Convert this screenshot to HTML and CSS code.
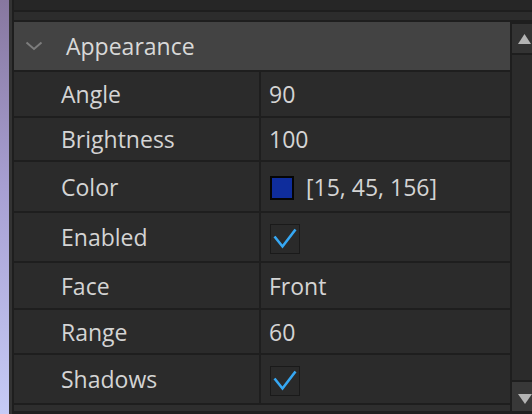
FILE: index.html
```html
<!DOCTYPE html>
<html>
<head>
<meta charset="utf-8">
<link rel="stylesheet" href="styles.css">
</head>
<body>
<div class="desktop"></div>
<div class="panel-edge"></div>
<div class="panel">
  <div class="filter"><span class="filter-text">Filter Properties (Ctrl+Shift+P)</span></div>
  <div class="toolbar"></div>
  <div class="main">
    <div class="list">
      <div class="header">
        <svg class="chevron" width="18" height="10" viewBox="0 0 18 10"><path d="M1.5 1.5 L9 8 L16.5 1.5" fill="none" stroke="#7d7d7d" stroke-width="2"/></svg>
        <span class="header-title">Appearance</span>
      </div>
      <div class="name">Angle</div><div class="value">90</div>
      <div class="name">Brightness</div><div class="value">100</div>
      <div class="name">Color</div><div class="value"><span class="swatch"></span><span class="swatch-text">[15, 45, 156]</span></div>
      <div class="name">Enabled</div><div class="value"><span class="checkbox"><svg width="28" height="28" viewBox="0 0 28 28"><path d="M3.5 11.5 L11.5 21.5 L24.5 4.5" fill="none" stroke="#36a8f4" stroke-width="2.6"/></svg></span></div>
      <div class="name">Face</div><div class="value">Front</div>
      <div class="name">Range</div><div class="value">60</div>
      <div class="name">Shadows</div><div class="value"><span class="checkbox"><svg width="28" height="28" viewBox="0 0 28 28"><path d="M3.5 11.5 L11.5 21.5 L24.5 4.5" fill="none" stroke="#36a8f4" stroke-width="2.6"/></svg></span></div>
      <div class="footer"></div>
    </div>
    <div class="scrollbar">
      <div class="scroll-btn"><svg width="20" height="29" viewBox="0 0 20 29"><path d="M6 20 L12.5 10 L19 20 Z" fill="#b4b4b4"/></svg></div>
      <div class="track"></div>
      <div class="scroll-btn down"><svg width="20" height="29" viewBox="0 0 20 29"><path d="M6 12 L20 12 L13 22 Z" fill="#b4b4b4"/></svg></div>
    </div>
  </div>
</div>
</body>
</html>
```

FILE: styles.css
```css
html, body {
  margin: 0;
  padding: 0;
}
body {
  width: 532px;
  height: 414px;
  overflow: hidden;
  display: flex;
  background: #1e1e1e;
  font-family: "Open Sans", "Liberation Sans", sans-serif;
  color: #d4d4d4;
  font-size: 23px;
}
.desktop {
  width: 9px;
  flex: none;
  background: linear-gradient(180deg, #87779f 0%, #a79fd2 45%, #c6cbf6 100%);
}
.panel-edge {
  width: 3px;
  flex: none;
  background: #333333;
}
.panel {
  flex: 1;
  min-width: 0;
  display: flex;
  flex-direction: column;
  padding-left: 2px;
  background: #1e1e1e;
}
.filter {
  height: 10px;
  flex: none;
  background: #262626;
  overflow: hidden;
  padding-left: 28px;
}
.filter-text {
  display: block;
  margin-top: -27px;
  line-height: 24px;
  color: #9a9a9a;
  white-space: nowrap;
}
.toolbar {
  height: 8px;
  flex: none;
  margin-top: 2px;
  background: #2c2c2c;
}
.main {
  margin-top: 2px;
  flex: 1;
  display: flex;
  gap: 2px;
  min-height: 0;
}
.list {
  width: 496px;
  flex: none;
  display: grid;
  grid-template-columns: 245px 1fr;
  grid-template-rows: 48px 44px 42px 49px 48px 45px 43px 48px 6px;
  gap: 2px;
  align-content: start;
  background: #1e1e1e;
}
.header {
  grid-column: 1 / 3;
  background: #434343;
  display: flex;
  align-items: center;
  color: #d8d8d8;
}
.chevron {
  margin-left: 11px;
  margin-top: -1px;
}
.header-title {
  margin-left: 23px;
}
.name {
  background: #2b2b2b;
  display: flex;
  align-items: center;
  padding-left: 47px;
}
.value {
  background: #2b2b2b;
  display: flex;
  align-items: center;
  padding-left: 8px;
}
.swatch {
  width: 20px;
  height: 20px;
  border: 2px solid #050505;
  background: rgb(15, 45, 156);
  margin-left: 1px;
  margin-top: 2px;
}
.swatch-text {
  margin-left: 12px;
}
.checkbox {
  width: 28px;
  height: 28px;
  border: 1px solid #1a1a1a;
  background: #2a2a2a;
  margin-left: 1px;
  margin-top: 3px;
  display: flex;
}
.footer {
  grid-column: 1 / 3;
  background: #2e2e2e;
}
.scrollbar {
  flex: 1;
  display: flex;
  flex-direction: column;
  gap: 2px;
  padding-top: 2px;
  padding-bottom: 3px;
}
.scroll-btn {
  height: 29px;
  flex: none;
  background: #333333;
}
.scroll-btn.down {
  background: #383838;
}
.track {
  flex: 1;
  background: #2b2b2b;
}
```
